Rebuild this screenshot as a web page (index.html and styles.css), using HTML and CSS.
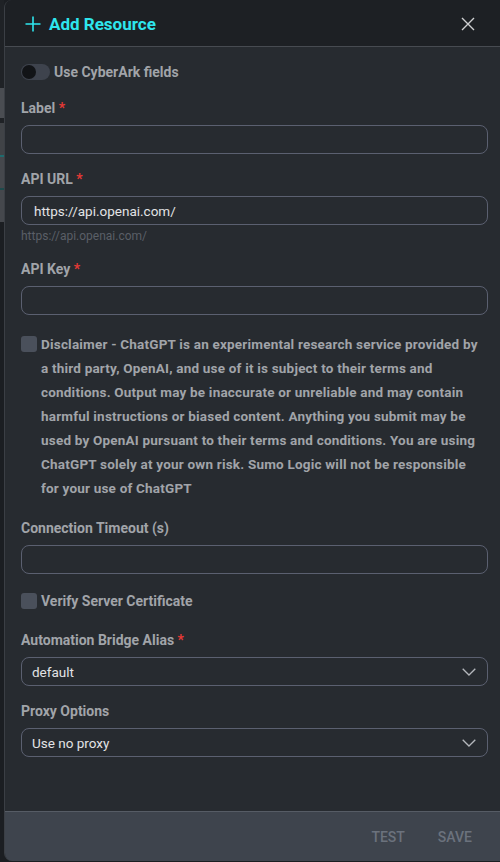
FILE: index.html
```html
<!DOCTYPE html>
<html>
<head>
<meta charset="utf-8">
<link rel="stylesheet" href="styles.css">
</head>
<body>
<div class="modal">
  <header class="modal-header">
    <div class="title">
      <svg class="plus" width="16" height="16" viewBox="0 0 16 16"><path d="M8 0.5V15.5M0.5 8H15.5" stroke="#2ee6ee" stroke-width="1.6" fill="none"/></svg>
      <span>Add Resource</span>
    </div>
    <svg class="close" width="14" height="14" viewBox="0 0 14 14"><path d="M1 1L13 13M13 1L1 13" stroke="#cfd0d2" stroke-width="1.4" fill="none"/></svg>
  </header>
  <main class="modal-body">
    <div class="toggle-row">
      <span class="toggle"><span class="knob"></span></span>
      <span class="text-bold">Use CyberArk fields</span>
    </div>

    <div class="field first">
      <div class="label">Label <span class="req">*</span></div>
      <div class="input"></div>
    </div>

    <div class="field">
      <div class="label">API URL <span class="req">*</span></div>
      <div class="input"><span class="value">https://api.openai.com/</span></div>
      <div class="helper">https://api.openai.com/</div>
    </div>

    <div class="field after-helper">
      <div class="label">API Key <span class="req">*</span></div>
      <div class="input"></div>
    </div>

    <div class="check-row disclaimer">
      <span class="checkbox"></span>
      <span class="text-small">Disclaimer - ChatGPT is an experimental research service provided by a third party, OpenAI, and use of it is subject to their terms and conditions. Output may be inaccurate or unreliable and may contain harmful instructions or biased content. Anything you submit may be used by OpenAI pursuant to their terms and conditions. You are using ChatGPT solely at your own risk. Sumo Logic will not be responsible for your use of ChatGPT</span>
    </div>

    <div class="field timeout">
      <div class="label">Connection Timeout (s)</div>
      <div class="input"></div>
    </div>

    <div class="check-row verify">
      <span class="checkbox"></span>
      <span class="text-bold">Verify Server Certificate</span>
    </div>

    <div class="field alias">
      <div class="label">Automation Bridge Alias <span class="req">*</span></div>
      <div class="input select"><span class="value">default</span>
        <svg class="chev" width="14" height="8" viewBox="0 0 14 8"><path d="M0.7 0.7L7 7L13.3 0.7" stroke="#b4b7bc" stroke-width="1.3" fill="none"/></svg>
      </div>
    </div>

    <div class="field">
      <div class="label">Proxy Options</div>
      <div class="input select"><span class="value">Use no proxy</span>
        <svg class="chev" width="14" height="8" viewBox="0 0 14 8"><path d="M0.7 0.7L7 7L13.3 0.7" stroke="#b4b7bc" stroke-width="1.3" fill="none"/></svg>
      </div>
    </div>
  </main>
  <footer class="modal-footer">
    <button class="btn">TEST</button>
    <button class="btn">SAVE</button>
  </footer>
</div>
</body>
</html>
```

FILE: styles.css
```css
html, body {
  margin: 0;
  padding: 0;
  height: 862px;
  overflow: hidden;
}
body {
  font-family: Roboto, "Noto Sans", sans-serif;
  background-color: #1b1e22;
  background-image: linear-gradient(to bottom,
    #1f2226 0px, #1f2226 88px,
    #4a4d52 88px, #4a4d52 118px,
    #1f2226 118px, #1f2226 123px,
    #404347 123px, #404347 155px,
    #1f6b6e 155px, #1f6b6e 157px,
    #45484d 157px, #45484d 188px,
    #1d4a4c 188px, #1d4a4c 190px,
    #45484d 190px, #45484d 222px,
    #1b1e22 222px, #1b1e22 862px);
  background-size: 4px 862px;
  background-repeat: no-repeat;
  padding-left: 4px;
  box-sizing: border-box;
}
.modal {
  width: 500px;
  height: 861px;
  display: flex;
  flex-direction: column;
  background: #272b30;
  border-left: 1px solid #3b3f45;
  border-radius: 8px 0 0 8px;
  overflow: hidden;
  box-sizing: border-box;
}
.modal-header {
  height: 47px;
  flex: none;
  box-sizing: border-box;
  background: #1d2024;
  border-bottom: 1px solid #474b51;
  display: flex;
  align-items: center;
  justify-content: space-between;
  padding: 1px 29px 0 20px;
}
.title {
  display: flex;
  align-items: center;
  gap: 8px;
  color: #2ee6ee;
  font-weight: 700;
  font-size: 17px;
}
.plus { display: block; }
.close { display: block; }
.modal-body {
  flex: 1;
  padding: 17px 16px 0 16px;
}
.toggle-row {
  display: flex;
  align-items: center;
  gap: 4px;
  height: 16px;
}
.toggle {
  width: 29px;
  height: 16px;
  border-radius: 8px;
  background: #3e434d;
  position: relative;
  flex: none;
}
.knob {
  position: absolute;
  left: 1px;
  top: 1px;
  width: 14px;
  height: 14px;
  border-radius: 50%;
  background: #121417;
}
.text-bold {
  color: #a1a4a9;
  font-weight: 700;
  font-size: 14px;
}
.text-small {
  color: #a1a4a9;
  font-weight: 700;
  font-size: 13.5px;
  letter-spacing: 0.2px;
  line-height: 24px;
}
.field {
  margin-top: 17px;
}
.field.first { margin-top: 20px; }
.field.after-helper { margin-top: 17px; }
.field.timeout { margin-top: 20px; }
.field.alias { margin-top: 23px; }
.label {
  color: #a1a4a9;
  font-weight: 700;
  font-size: 14px;
  line-height: 16px;
  margin-bottom: 9px;
}
.req {
  color: #e53935;
}
.input {
  height: 29px;
  box-sizing: border-box;
  border: 1px solid #5b6070;
  border-radius: 8px;
  display: flex;
  align-items: center;
  padding: 0 11px 0 12px;
  justify-content: space-between;
}
.select { padding-left: 10px; }
.value {
  color: #e2e3e5;
  font-size: 13.5px;
}
.chev { display: block; }
.helper {
  color: #5a5f67;
  font-size: 12px;
  line-height: 16px;
  margin-top: 3px;
}
.check-row {
  display: flex;
  align-items: flex-start;
  gap: 4px;
}
.checkbox {
  width: 16px;
  height: 16px;
  border-radius: 3px;
  background: #4a505b;
  flex: none;
}
.disclaimer {
  margin-top: 17px;
  padding-right: 8px;
}
.disclaimer .checkbox { margin-top: 4px; }
.verify {
  margin-top: 19px;
  align-items: center;
  height: 16px;
}
.modal-footer {
  height: 50px;
  flex: none;
  box-sizing: border-box;
  background: #3e444d;
  border-top: 1px solid #565c65;
  display: flex;
  justify-content: flex-end;
  align-items: center;
  gap: 1px;
  padding: 0 16px 0 0;
}
.btn {
  background: none;
  border: none;
  font-family: Roboto, sans-serif;
  font-size: 14px;
  font-weight: 500;
  color: #6b727d;
  padding: 6px 16px;
}
```
